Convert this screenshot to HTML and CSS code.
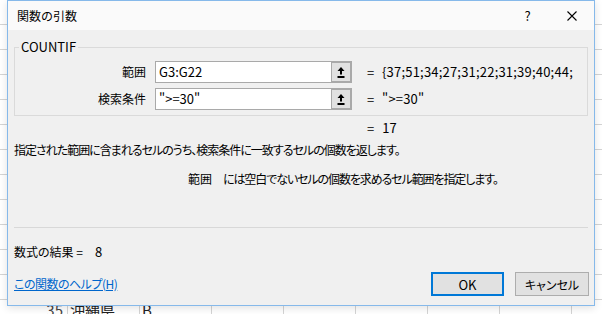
FILE: index.html
```html
<!DOCTYPE html>
<html lang="ja">
<head>
<meta charset="utf-8">
<title>関数の引数</title>
<link rel="stylesheet" href="styles.css">
</head>
<body>
<div class="sheet">
  <div class="sheet-row">
    <span class="rownum">35</span>
    <span class="cell pref">沖縄県</span>
    <span class="cell grade">B</span>
  </div>
</div>

<div class="dialog">
  <div class="titlebar">
    <span class="title">関数の引数</span>
    <div class="caption-buttons">
      <span class="cap-btn help">?</span>
      <span class="cap-btn close">
        <svg width="10" height="10" viewBox="0 0 10 10"><path d="M0.5 0.5 L9.5 9.5 M9.5 0.5 L0.5 9.5" stroke="#000" stroke-width="1.1" fill="none"/></svg>
      </span>
    </div>
  </div>

  <fieldset class="group">
    <legend class="group-title">COUNTIF</legend>
    <div class="args">
      <label class="arg-label">範囲</label>
      <div class="arg-input">
        <span class="arg-text">G3:G22</span>
        <span class="ref-btn"><svg width="8" height="11" viewBox="0 0 8 11"><polygon points="4,0 7.5,4 0.5,4" fill="#000"/><rect x="3" y="4" width="2" height="3.5" fill="#000"/><rect x="0.5" y="9" width="7" height="2" fill="#000"/></svg></span>
      </div>
      <span class="eq">=</span>
      <span class="arg-value">{37;51;34;27;31;22;31;39;40;44;</span>

      <label class="arg-label">検索条件</label>
      <div class="arg-input">
        <span class="arg-text">"&gt;=30"</span>
        <span class="ref-btn"><svg width="8" height="11" viewBox="0 0 8 11"><polygon points="4,0 7.5,4 0.5,4" fill="#000"/><rect x="3" y="4" width="2" height="3.5" fill="#000"/><rect x="0.5" y="9" width="7" height="2" fill="#000"/></svg></span>
      </div>
      <span class="eq">=</span>
      <span class="arg-value">"&gt;=30"</span>
    </div>
  </fieldset>

  <div class="func-result"><span class="eq">=</span><span class="arg-value">17</span></div>
  <p class="func-desc">指定された範囲に含まれるセルのうち、検索条件に一致するセルの個数を返します。</p>
  <p class="arg-desc"><span class="arg-name">範囲</span>には空白でないセルの個数を求めるセル範囲を指定します。</p>

  <hr class="sep">

  <p class="formula-result">数式の結果 =<span class="result-value">8</span></p>

  <div class="footer">
    <a class="help-link" href="#">この関数のヘルプ(H)</a>
    <div class="buttons">
      <button class="btn btn-default">OK</button>
      <button class="btn">キャンセル</button>
    </div>
  </div>
</div>
</body>
</html>
```

FILE: styles.css
```css
* { box-sizing: border-box; }

html, body {
  margin: 0;
  padding: 0;
}

body {
  width: 602px;
  height: 314px;
  overflow: hidden;
  position: relative;
  font-family: "Noto Sans CJK JP", sans-serif;
  font-size: 12px;
  color: #000;
  background: #fff;
}

.sheet {
  position: absolute;
  inset: 0;
  background-image:
    repeating-linear-gradient(to bottom, transparent 0, transparent 24px, #d4d4d4 24px, #d4d4d4 25px),
    repeating-linear-gradient(to right, transparent 0, transparent 67px, #d4d4d4 67px, #d4d4d4 68px, transparent 68px, transparent 72px);
}

.sheet-row {
  position: absolute;
  left: 0;
  top: 301px;
  height: 13px;
  width: 602px;
  display: flex;
  font-size: 15px;
  line-height: 18px;
  color: #222;
}

.rownum {
  width: 65px;
  text-align: right;
  padding-right: 2px;
  color: #444;
}

.cell.pref { width: 72px; padding-left: 5px; }
.cell.grade { padding-left: 5px; }

.dialog {
  position: absolute;
  left: 7px;
  top: 0;
  width: 588px;
  height: 306px;
  border: 1px solid #86b9ea;
  background: #f0f0f0;
  box-shadow: 0 2px 8px rgba(0, 0, 0, 0.12);
  display: flex;
  flex-direction: column;
}

.titlebar {
  height: 29px;
  background: #fafafa;
  display: flex;
  align-items: center;
  justify-content: space-between;
  padding-left: 9px;
  flex-shrink: 0;
}

.title { font-size: 12px; line-height: 16px; }

.caption-buttons { display: flex; height: 29px; }

.cap-btn {
  width: 45px;
  height: 29px;
  display: flex;
  align-items: center;
  justify-content: center;
}

.cap-btn.help { font-size: 13px; padding-left: 2px; }

.group {
  margin: 9px 6px 0;
  padding: 6px 0 5px;
  border: 1px solid #dadada;
  min-width: 0;
}

.group-title {
  margin-left: 4px;
  padding: 0 2px;
  font-size: 13px;
  line-height: 16px;
}

.args {
  display: grid;
  grid-template-columns: 131px 197px 13px auto;
  column-gap: 9px;
  row-gap: 5px;
  align-items: center;
}

.args .eq { margin-left: 6px; }
.args .arg-value { margin-left: -1px; letter-spacing: 0.2px; }

.arg-label { text-align: right; line-height: 16px; }

.arg-input {
  height: 22px;
  border: 1px solid #a9a9a9;
  background: #fff;
  display: flex;
  align-items: stretch;
  justify-content: space-between;
}

.arg-text {
  padding-left: 3px;
  font-size: 13px;
  line-height: 20px;
}

.ref-btn {
  width: 20px;
  height: 20px;
  border: 1px solid #a9a9a9;
  background: #e1e1e1;
  display: flex;
  align-items: center;
  justify-content: center;
}

.eq { font-size: 13px; }

.arg-value { font-size: 13px; white-space: nowrap; line-height: 16px; }

.func-result {
  margin: 4px 0 0 359px;
  height: 18px;
  line-height: 18px;
  display: flex;
  gap: 8px;
}

.func-desc {
  margin: 3px 0 0 6px;
  line-height: 18px;
  font-feature-settings: "palt";
  letter-spacing: -1px;
}

.arg-desc {
  margin: 11px 0 0 180px;
  line-height: 18px;
  font-feature-settings: "palt";
  letter-spacing: -1.1px;
}

.arg-name { margin-right: 11px; letter-spacing: 0; }

.sep {
  margin: 39px 6px 0;
  border: 0;
  border-top: 1px solid #d8d8d8;
  height: 0;
}

.formula-result {
  margin: 15px 0 0 6px;
  line-height: 18px;
  font-feature-settings: "palt";
}

.result-value { margin-left: 12px; font-size: 13px; }

.footer {
  margin-top: 11px;
  padding: 0 5px 0 6px;
  display: flex;
  align-items: center;
  justify-content: space-between;
}

.help-link {
  color: #0066cc;
  text-decoration: underline;
  font-feature-settings: "palt";
  letter-spacing: -0.5px;
  line-height: 18px;
}

.buttons { display: flex; gap: 11px; }

.btn {
  width: 74px;
  height: 24px;
  border: 1px solid #adadad;
  background: #e1e1e1;
  font-family: inherit;
  font-size: 12px;
  color: #000;
  padding: 0;
  font-feature-settings: "palt";
}

.btn-default {
  width: 73px;
  border: 2px solid #0078d7;
  font-size: 13px;
}
```
